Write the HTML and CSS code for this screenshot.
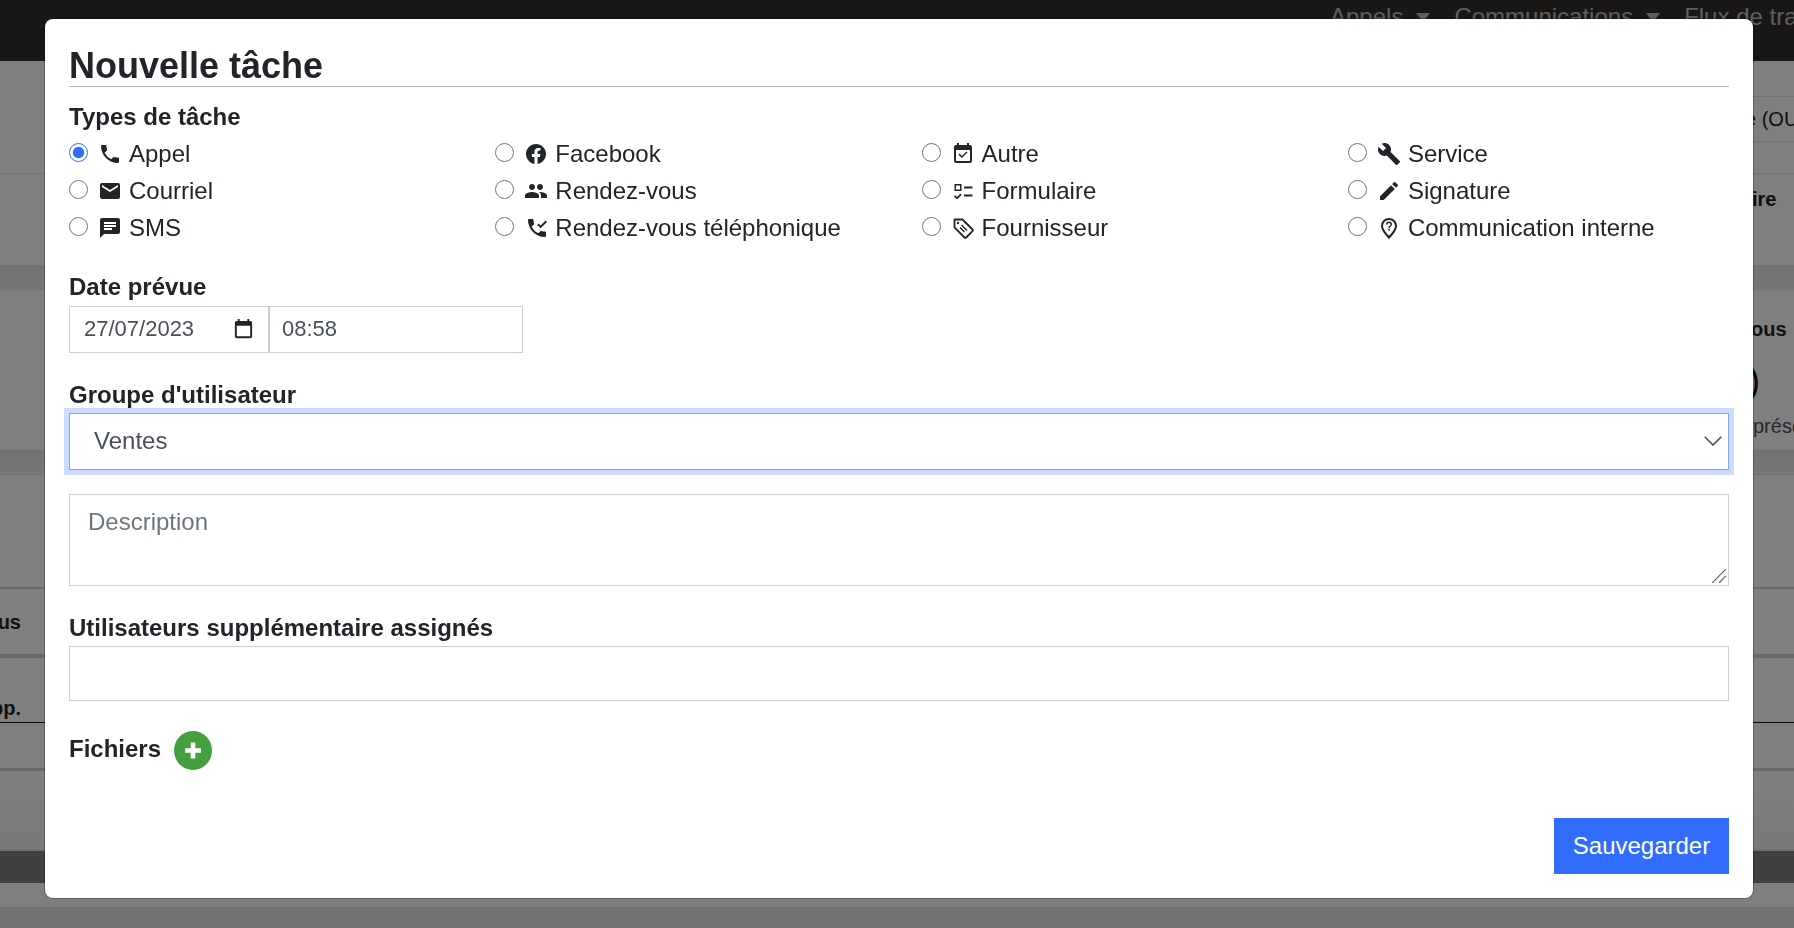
FILE: index.html
```html
<!DOCTYPE html>
<html lang="fr">
<head>
<meta charset="utf-8">
<title>Nouvelle tâche</title>
<link rel="stylesheet" href="styles.css">
</head>
<body>
<div class="page">
  <header class="topbar">
    <nav class="topnav">
      <span class="nav-item">Appels<i class="caret"></i></span>
      <span class="nav-item">Communications<i class="caret"></i></span>
      <span class="nav-item">Flux de travail</span>
    </nav>
  </header>
  <div class="hero">
    <div class="hero-row hero-row-a"></div>
    <div class="hero-row hero-row-b"><span class="edge-text">e (OUI)</span></div>
    <div class="hero-row hero-row-c"></div>
  </div>
  <div class="sec sec-form"><span class="edge-text bold">ire</span></div>
  <div class="bar"></div>
  <div class="sec sec-rdv">
    <span class="edge-text bold rdv-title">ous</span>
    <span class="edge-text rdv-count">)</span>
    <span class="edge-text rdv-sub">présent</span>
  </div>
  <div class="bar"></div>
  <div class="sec sec-plain"></div>
  <div class="sec sec-us"><span class="left-text bold">us</span></div>
  <div class="sec sec-pp"><span class="left-text bold">pp.</span></div>
  <div class="sec sec-thick"></div>
  <div class="sec sec-fade"></div>
  <div class="footer-bar"></div>
  <div class="sec sec-tail"></div>
  <div class="sec sec-end"></div>
</div>
<div class="backdrop"></div>
<section class="modal">
  <h1 class="title">Nouvelle tâche</h1>
  <div class="label label-types">Types de tâche</div>
  <div class="types">
    <label class="type"><input type="radio" name="t" checked><svg class="ico" viewBox="0 0 24 24"><path d="M20 15.5c-1.25 0-2.45-.2-3.57-.57a1 1 0 0 0-1.02.24l-2.2 2.2a15.05 15.05 0 0 1-6.59-6.58l2.2-2.21a.96.96 0 0 0 .25-1A11.36 11.36 0 0 1 8.5 4a1 1 0 0 0-1-1H4a1 1 0 0 0-1 1c0 9.39 7.61 17 17 17a1 1 0 0 0 1-1v-3.5a1 1 0 0 0-1-1z"/></svg><span>Appel</span></label>
    <label class="type"><input type="radio" name="t"><svg class="ico" viewBox="0 0 24 24"><path d="M12 2C6.48 2 2 6.48 2 12c0 4.99 3.66 9.13 8.44 9.88v-6.99H7.9V12h2.54V9.8c0-2.5 1.49-3.89 3.78-3.89 1.09 0 2.24.2 2.24.2v2.46h-1.26c-1.24 0-1.63.77-1.63 1.56V12h2.78l-.45 2.89h-2.33v6.99C18.34 21.13 22 16.99 22 12c0-5.52-4.48-10-10-10z"/></svg><span>Facebook</span></label>
    <label class="type"><input type="radio" name="t"><svg class="ico" viewBox="0 0 24 24"><path d="M19 3h-1V1h-2v2H8V1H6v2H5a2 2 0 0 0-2 2v14a2 2 0 0 0 2 2h14a2 2 0 0 0 2-2V5a2 2 0 0 0-2-2zm0 16H5V8h14v11z"/><path d="M16.500 10.500l-5.600 5.600-3.400-3.400 1.100-1.100 2.300 2.300 4.500-4.500z"/></svg><span>Autre</span></label>
    <label class="type"><input type="radio" name="t"><svg class="ico" viewBox="0 0 24 24"><path d="M22.700 19l-9.100-9.100c.9-2.300.4-5-1.500-6.900-2-2-5-2.400-7.400-1.300L9 6 6 9 1.600 4.700C.4 7.100.9 10.100 2.900 12.100c1.900 1.900 4.600 2.400 6.900 1.500l9.100 9.100c.4.4 1 .4 1.400 0l2.300-2.300c.5-.4.5-1.100.1-1.400z"/></svg><span>Service</span></label>

    <label class="type"><input type="radio" name="t"><svg class="ico" viewBox="0 0 24 24"><path d="M20 4H4a2 2 0 0 0-2 2v12a2 2 0 0 0 2 2h16a2 2 0 0 0 2-2V6a2 2 0 0 0-2-2zm0 4l-8 5-8-5V6l8 5 8-5v2z"/></svg><span>Courriel</span></label>
    <label class="type"><input type="radio" name="t"><svg class="ico" viewBox="0 0 24 24"><path d="M16 11c1.660 0 2.990-1.340 2.990-3S17.660 5 16 5s-3 1.340-3 3 1.340 3 3 3zm-8 0c1.660 0 2.990-1.340 2.990-3S9.660 5 8 5 5 6.340 5 8s1.340 3 3 3zm0 2c-2.330 0-7 1.170-7 3.500V19h14v-2.500C15 14.170 10.330 13 8 13zm8 0c-.29 0-.62.02-.97.05 1.160.84 1.970 1.970 1.970 3.450V19h6v-2.500c0-2.330-4.670-3.500-7-3.500z"/></svg><span>Rendez-vous</span></label>
    <label class="type"><input type="radio" name="t"><svg class="ico" viewBox="0 0 24 24"><path fill-rule="evenodd" d="M3.500 5h7v7h-7zM5 6.500v4h4v-4z"/><path d="M13 7.500h8.500v2H13zM13 15.500h8.500v2H13z"/><path d="M3 17.500l1.200-1.200 1.800 1.800 3.500-3.500 1.200 1.200-4.700 4.700z"/></svg><span>Formulaire</span></label>
    <label class="type"><input type="radio" name="t"><svg class="ico" viewBox="0 0 24 24"><path d="M3 17.250V21h3.750L17.810 9.940l-3.750-3.750L3 17.250zM20.710 7.040a1 1 0 0 0 0-1.410l-2.340-2.340a1 1 0 0 0-1.410 0l-1.830 1.830 3.750 3.750 1.830-1.830z"/></svg><span>Signature</span></label>

    <label class="type"><input type="radio" name="t"><svg class="ico" viewBox="0 0 24 24"><path d="M20 2H4a2 2 0 0 0-2 2v18l4-4h14a2 2 0 0 0 2-2V4a2 2 0 0 0-2-2zM6 9h12v2H6V9zm8 5H6v-2h8v2zm4-6H6V6h12v2z"/></svg><span>SMS</span></label>
    <label class="type"><input type="radio" name="t"><svg class="ico" viewBox="0 0 24 24"><path d="M21 15.500c-1.250 0-2.450-.2-3.570-.57a1 1 0 0 0-1.020.24l-2.200 2.200a15.050 15.050 0 0 1-6.590-6.580l2.200-2.210a.96.96 0 0 0 .25-1A11.360 11.360 0 0 1 9.500 4a1 1 0 0 0-1-1H5a1 1 0 0 0-1 1c0 9.390 7.610 17 17 17a1 1 0 0 0 1-1v-3.500a1 1 0 0 0-1-1z"/><path d="M13.200 8.900l1.400-1.400 2 2 5-5L23 5.900l-6.400 6.400z"/></svg><span>Rendez-vous téléphonique</span></label>
    <label class="type"><input type="radio" name="t"><svg class="ico" viewBox="0 0 24 24"><path class="tag-line" d="M4 3.500h7.500L21.500 13.500a1.200 1.200 0 0 1 0 1.700l-6.300 6.300a1.200 1.200 0 0 1-1.700 0L3.500 11.500V4a.5.5 0 0 1 .5-.5z"/><path class="tag-thin" d="M10.500 9l5.500 5.500M9 11.500l4.500 4.500"/><circle cx="7" cy="7" r="1.200"/></svg><span>Fournisseur</span></label>
    <label class="type"><input type="radio" name="t"><svg class="ico" viewBox="0 0 24 24"><path d="M12 2a8 8 0 0 0-8 8c0 5.300 8 13 8 13s8-7.700 8-13a8 8 0 0 0-8-8zm0 17.800C9.800 17.500 6 13 6 10a6 6 0 0 1 12 0c0 3-3.800 7.500-6 9.800z"/><path d="M11.200 13h1.600v1.600h-1.600zM12 5.500a3 3 0 0 0-3 3h1.500a1.500 1.500 0 0 1 3 0c0 1.400-2.200 1.200-2.200 3.700h1.500c0-1.700 2.200-1.900 2.200-3.700a3 3 0 0 0-3-3z"/></svg><span>Communication interne</span></label>
  </div>

  <div class="label label-date">Date prévue</div>
  <div class="datetime">
    <div class="field date-field"><span>27/07/2023</span><svg class="cal" viewBox="0 0 24 24"><path d="M19 3h-1V1h-2v2H8V1H6v2H5a2 2 0 0 0-2 2v14a2 2 0 0 0 2 2h14a2 2 0 0 0 2-2V5a2 2 0 0 0-2-2zm0 16H5V8h14v11z"/></svg></div>
    <div class="field time-field"><span>08:58</span></div>
  </div>

  <div class="label label-group">Groupe d'utilisateur</div>
  <div class="select"><span>Ventes</span><svg class="chev" viewBox="0 0 18 10"><path d="M.7.7L9 9l8.300-8.300" fill="none" stroke="#4b5055" stroke-width="1.600"/></svg></div>

  <div class="textarea"><span>Description</span><svg class="grip" viewBox="0 0 14 14"><path d="M0 14L14 0M7 14l7-7" stroke="#5f5f5f" stroke-width="1.200" fill="none"/></svg></div>

  <div class="label label-users">Utilisateurs supplémentaire assignés</div>
  <div class="plain-input"></div>

  <div class="files"><span class="label files-label">Fichiers</span><span class="add"><svg viewBox="0 0 38 38"><path d="M16.700 11h4.600v5.700H27v4.600h-5.700V27h-4.600v-5.700H11v-4.600h5.700z" fill="#fff"/></svg></span></div>

  <div class="actions"><button class="save">Sauvegarder</button></div>
</section>
</body>
</html>
```

FILE: styles.css
```css
* { box-sizing: border-box; }
html, body { margin: 0; height: 100%; overflow: hidden; }
body { font-family: "Liberation Sans", Arial, sans-serif; color: #212529; background: #fff; }

.page { height: 928px; display: flex; flex-direction: column; overflow: hidden; }
.topbar { height: 61px; flex: none; background: #302e2c; overflow: hidden; }
.topnav { display: flex; gap: 24px; padding: 3px 0 0 1330px; color: #bdbdbd; font-size: 24px; line-height: 28px; white-space: nowrap; }
.nav-item { display: flex; align-items: center; }
.caret { width: 0; height: 0; margin-left: 13px; border-left: 7px solid transparent; border-right: 7px solid transparent; border-top: 9px solid #bdbdbd; }

.hero { height: 113px; flex: none; display: flex; flex-direction: column; align-items: flex-end; border-bottom: 1px solid #dee2e6; }
.hero-row { width: 300px; flex: none; border-bottom: 1px solid #dee2e6; display: flex; align-items: center; }
.hero-row-a { height: 36px; }
.hero-row-b { height: 45px; }
.hero-row-c { flex: 1; border-bottom: 0; }
.hero-row-b .edge-text { margin-left: 251px; }

.edge-text { font-size: 20px; line-height: 24px; white-space: nowrap; display: block; }
.bold { font-weight: 700; }
.left-text { font-size: 20px; line-height: 24px; width: 21px; display: flex; justify-content: flex-end; white-space: nowrap; }

.sec { flex: none; border-bottom: 1px solid #dee2e6; overflow: hidden; }
.bar { height: 25px; flex: none; background: linear-gradient(#e4e4e4, #eeeeee); border-bottom: 1px solid #dee2e6; }

.sec-form { height: 91px; border: 0; padding: 13px 0 0 1752px; }
.sec-rdv { height: 160px; border: 0; padding: 27px 0 0 1751px; }
.rdv-count { font-size: 36px; line-height: 42px; margin: 19px 0 0 -3px; color: #111; }
.rdv-sub { margin-top: 12px; padding-left: 2px; color: #4d545a; }
.sec-plain { height: 114px; border-bottom: 2px solid #d2d2d2; }
.sec-us { height: 69px; border-bottom: 4px solid #d0d0d0; padding-top: 21px; }
.sec-pp { height: 65px; border-bottom: 1px solid #111; padding-top: 38px; }
.sec-thick { height: 48px; border-bottom: 3px solid #d0d0d0; }
.sec-fade { height: 80px; background: linear-gradient(#ffffff, #f2f2f2); border-bottom: 2px solid #e0e0e0; }
.footer-bar { height: 32px; flex: none; background: #808080; }
.sec-tail { height: 24px; border: 0; }
.sec-end { flex: 1; border: 0; background: #e4e4e4; }

.backdrop { position: fixed; inset: 0; background: rgba(0,0,0,.5); }

.modal { position: fixed; left: 45px; top: 19px; width: 1708px; height: 879px; background: #fff; border-radius: 8px; padding: 0 24px; box-shadow: 0 0 0 1px rgba(0,0,0,.25); }
.title { margin: 0; padding-top: 26px; height: 68px; font-size: 36px; line-height: 42px; font-weight: 700; border-bottom: 1px solid #b9b9b9; }

.label { font-size: 24px; font-weight: 700; line-height: 26px; }
.label-types { margin-top: 17px; }
.label-date { margin-top: 28px; }
.label-group { margin-top: 29px; }
.label-users { margin-top: 29px; }
.files-label { margin-bottom: 3px; }

.types { display: grid; grid-template-columns: repeat(4, 426.3px); grid-auto-rows: 37px; margin-top: 5px; }
.type { display: flex; align-items: center; font-size: 24px; white-space: nowrap; }
.type input { margin: 0 10px 2px 0; width: 19px; height: 19px; accent-color: #2f6bff; }
.ico { width: 24px; height: 24px; fill: #212529; margin-right: 7px; flex: none; }
.tag-line { fill: none; stroke: #212529; stroke-width: 1.800; }
.tag-thin { fill: none; stroke: #212529; stroke-width: 1.500; }

.datetime { display: flex; margin-top: 6px; }
.field { height: 47px; border: 1px solid #c8d0d8; display: flex; align-items: center; font-size: 22px; color: #495057; padding-bottom: 1px; }
.date-field { width: 200px; padding-left: 14px; padding-right: 13px; justify-content: space-between; }
.time-field { width: 254px; padding-left: 12px; padding-right: 12px; }
.cal { width: 23px; height: 23px; fill: #212529; }

.select { height: 57px; margin-top: 5px; border: 1px solid #80a8f0; box-shadow: 0 0 0 5px #cddcfc; font-size: 24px; color: #495057; display: flex; align-items: center; justify-content: space-between; padding: 0 6px 2px 24px; }
.chev { width: 18px; height: 10px; }
.textarea { height: 92px; margin-top: 24px; border: 1px solid #c8d0d8; font-size: 24px; line-height: 28px; color: #6c757d; padding: 13px 18px; position: relative; }
.grip { position: absolute; right: 2px; bottom: 2px; width: 14px; height: 14px; }
.plain-input { height: 55px; margin-top: 5px; border: 1px solid #c8d0d8; }

.files { display: flex; align-items: center; gap: 13px; margin-top: 30px; }
.add { width: 38px; height: 39px; border-radius: 50%; background: #43a03f; display: block; }
.add svg { display: block; width: 38px; height: 39px; }

.actions { display: flex; justify-content: flex-end; margin-top: 48px; }
.save { width: 175px; height: 56px; border: 0; background: #316cff; color: #fff; font: 24px "Liberation Sans", Arial, sans-serif; padding: 0; }
```
